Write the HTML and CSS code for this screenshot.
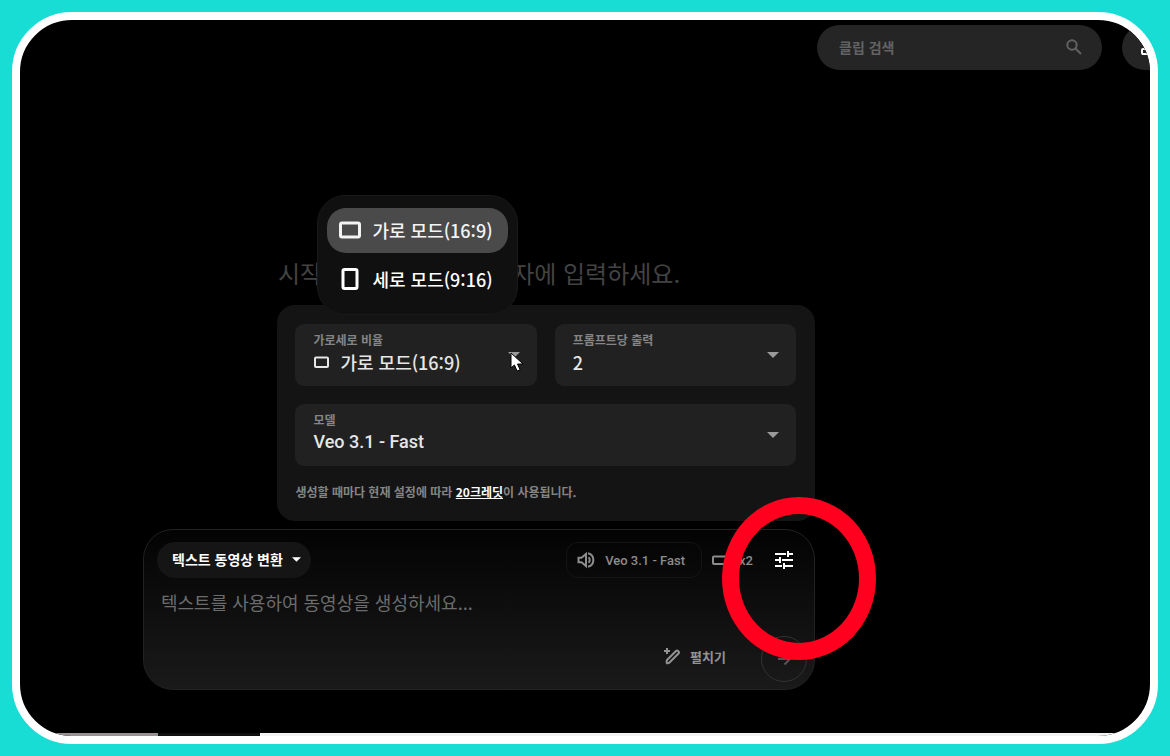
FILE: index.html
```html
<!DOCTYPE html>
<html lang="ko">
<head>
<meta charset="utf-8">
<meta name="viewport" content="width=device-width, initial-scale=1">
<title>Veo</title>
<link rel="stylesheet" href="styles.css">
</head>
<body>
<div class="screen">
  <header class="topbar">
    <label class="search">
      <input class="search-input" type="search" placeholder="클립 검색" aria-label="클립 검색">
      <svg class="search-icon" viewBox="0 0 18 18" aria-hidden="true"><circle cx="7" cy="7" r="4.7"/><path d="M10.5 10.5 16 16"/></svg>
    </label>
    <button class="round-button" type="button" aria-label="보기 설정">
      <svg viewBox="0 0 20 20" aria-hidden="true"><rect x="3" y="11" width="6" height="5" rx="1"/><path d="M4 6h14M12 13h6"/></svg>
    </button>
  </header>

  <main class="workspace">
    <div class="column">
      <h1 class="headline">시작하려면 프롬프트 상자에 입력하세요.</h1>

      <section class="settings" aria-label="설정">
        <div class="fields">
          <div class="field">
            <label class="field-label" for="ratio">가로세로 비율</label>
            <div class="field-value">
              <svg class="value-icon" viewBox="0 0 16 14" aria-hidden="true"><rect x="1.5" y="2.5" width="13" height="9.5" rx="1"/></svg>
              <select class="select" id="ratio"><option>가로 모드(16:9)</option><option>세로 모드(9:16)</option></select>
            </div>
            <svg class="caret" viewBox="0 0 12 6" aria-hidden="true"><path d="M0 0h12L6 6z"/></svg>
            <svg class="cursor" viewBox="0 0 14 20" aria-hidden="true"><path d="M1 1v15l3.4-3 2.7 6 3-1.3-2.6-5.7H13z"/></svg>
            <div class="menu" role="listbox" aria-label="가로세로 비율">
              <button class="menu-item selected" type="button" role="option" aria-selected="true">
                <svg viewBox="0 0 24 24" aria-hidden="true"><rect x="2.5" y="5" width="19" height="14" rx="1.5"/></svg>가로 모드(16:9)
              </button>
              <button class="menu-item" type="button" role="option" aria-selected="false">
                <svg viewBox="0 0 24 24" aria-hidden="true"><rect x="5" y="2.5" width="14" height="19" rx="1.5"/></svg>세로 모드(9:16)
              </button>
            </div>
          </div>
          <div class="field">
            <label class="field-label" for="count">프롬프트당 출력</label>
            <div class="field-value"><select class="select" id="count"><option>2</option></select></div>
            <svg class="caret" viewBox="0 0 12 6" aria-hidden="true"><path d="M0 0h12L6 6z"/></svg>
          </div>
          <div class="field wide">
            <label class="field-label" for="model">모델</label>
            <div class="field-value"><select class="select latin" id="model"><option>Veo 3.1 - Fast</option></select></div>
            <svg class="caret" viewBox="0 0 12 6" aria-hidden="true"><path d="M0 0h12L6 6z"/></svg>
          </div>
        </div>
        <p class="hint">생성할 때마다 현재 설정에 따라 <a class="credits" href="#">20크레딧</a>이 사용됩니다.</p>
      </section>

      <section class="composer" aria-label="프롬프트">
        <div class="row">
          <button class="mode" type="button">텍스트 동영상 변환
            <svg class="mode-caret" viewBox="0 0 10 5" aria-hidden="true"><path d="M0 0h10L5 5z"/></svg>
          </button>
          <div class="status">
            <button class="model-chip latin" type="button">
              <svg class="chip-icon" viewBox="0 0 18 18" aria-hidden="true"><path d="M1.500 6.800h3L9 3v12l-4.500-3.800h-3z"/><path d="M11.500 6.300a3.500 3.500 0 0 1 0 5.400M11 2.200a7 7 0 0 1 0 13.600"/></svg>
              Veo 3.1 - Fast
            </button>
            <span class="count-chip latin">
              <svg class="chip-icon" viewBox="0 0 18 18" aria-hidden="true"><rect x="2" y="5.500" width="14" height="7.500" rx="1"/></svg>
              x2
            </span>
            <button class="tune" type="button" aria-label="설정">
              <svg viewBox="0 0 20 20" aria-hidden="true"><path d="M1 4h11M15 4h4M14 1v6M1 10h4M8 10h11M6 7v6M1 16h7M11 16h8M10 13v6"/></svg>
            </button>
          </div>
        </div>
        <textarea class="prompt" rows="1" placeholder="텍스트를 사용하여 동영상을 생성하세요..." aria-label="프롬프트 입력"></textarea>
        <div class="row actions">
          <button class="expand" type="button">
            <svg class="chip-icon" viewBox="0 0 18 18" aria-hidden="true"><path d="M4 13 13 4q1-1 2 0l.5.500q1 1 0 2l-9 9q-1 1-2.500.800-1-1.300 0-3.300z"/><path d="M4 1v6M1 4h6"/></svg>
            펼치기
          </button>
          <button class="send" type="button" aria-label="보내기">
            <svg viewBox="0 0 20 20" aria-hidden="true"><path d="M4 10h12M10.500 4.500 16 10l-5.500 5.500"/></svg>
          </button>
        </div>
        <div class="ring"></div>
      </section>
    </div>
  </main>

  <div class="filmstrip" aria-hidden="true"><span class="frame-gray"></span><span class="frame-dark"></span><span class="frame-light"></span></div>
</div>
</body>
</html>
```

FILE: styles.css
```css
* { box-sizing: border-box; }

body {
  margin: 0;
  min-height: 100vh;
  padding: 12px;
  display: flex;
  background: #18ddd5;
  color: #e6e6e6;
  font-family: "Noto Sans CJK KR", sans-serif;
}

button, input, select, textarea {
  margin: 0;
  padding: 0;
  border: 0;
  background: none;
  color: inherit;
  font: inherit;
}

svg {
  flex: none;
  fill: none;
  stroke: currentColor;
  stroke-width: 2;
}

.screen {
  flex: 1;
  min-width: 0;
  display: flex;
  flex-direction: column;
  overflow: hidden;
  border: 8px solid #fff;
  border-radius: 60px;
  background: #000;
}

.latin { font-family: Roboto, "Noto Sans CJK KR", sans-serif; }

.topbar {
  display: flex;
  justify-content: flex-end;
  gap: 20px;
  margin-right: -18px;
  padding-top: 5px;
}

.search {
  display: flex;
  align-items: center;
  width: 285px;
  height: 45px;
  padding: 0 19px 2px 22px;
  border-radius: 23px;
  background: #252525;
  color: #626262;
}

.search-input {
  flex: 1;
  min-width: 0;
  font-size: 14px;
  font-weight: 700;
}

.search-input::placeholder, .prompt::placeholder { color: inherit; opacity: 1; }

.search-icon { width: 18px; height: 18px; }

.round-button {
  width: 46px;
  height: 45px;
  padding-left: 17px;
  border-radius: 50%;
  background: #252525;
  color: #fff;
}

.round-button svg { display: block; width: 20px; height: 20px; }

.workspace {
  flex: 1;
  display: flex;
  flex-direction: column;
  justify-content: flex-end;
  align-items: center;
  padding: 0 212px 43px 0;
}

.column {
  width: 100%;
  max-width: 672px;
  display: flex;
  flex-direction: column;
}

.headline {
  margin: 0 0 16px;
  color: #434343;
  font-size: 24px;
  line-height: 32px;
  font-weight: 400;
  text-align: center;
}

.settings {
  align-self: flex-end;
  width: 80%;
  margin-bottom: 8px;
  padding: 19px 19px 19px 18px;
  border-radius: 18px;
  background: #141414;
}

.fields {
  display: grid;
  grid-template-columns: 1fr 1fr;
  gap: 18px;
}

.field {
  position: relative;
  height: 62px;
  padding: 7px 18px;
  border-radius: 9px;
  background: #212121;
}

.wide { grid-column: span 2; }

.field-label {
  display: block;
  color: #858585;
  font-size: 12px;
  line-height: 18px;
  font-weight: 700;
}

.field-value {
  display: flex;
  align-items: center;
  gap: 10px;
}

.value-icon { width: 17px; height: 14px; }

.select {
  flex: 1;
  appearance: none;
  font-size: 18px;
  line-height: 26px;
  font-weight: 500;
}

.caret {
  position: absolute;
  top: 28px;
  right: 17px;
  width: 12px;
  height: 6px;
  fill: #9a9a9a;
  stroke: none;
}

.cursor {
  position: absolute;
  top: 28px;
  right: 13px;
  width: 14px;
  height: 20px;
  fill: #fff;
  stroke: #000;
  stroke-width: 1;
}

.menu {
  position: absolute;
  left: 22px;
  bottom: 71px;
  display: flex;
  flex-direction: column;
  gap: 4px;
  padding: 12px 9px;
  border: 1px solid #191919;
  border-radius: 28px;
  background: #101010;
}

.menu-item {
  display: flex;
  align-items: center;
  gap: 10px;
  height: 45px;
  padding: 0 15px 1px 11px;
  border-radius: 19px;
  color: #fff;
  font-size: 18px;
  font-weight: 500;
  white-space: nowrap;
}

.menu-item svg { width: 24px; height: 24px; stroke-width: 3; }

.selected { background: #4a4a4a; color: #f4f4f4; }

.hint {
  margin: 16px 0 0;
  color: #858585;
  font-size: 12px;
  line-height: 20px;
  font-weight: 700;
}

.credits { color: #fff; }

.composer {
  position: relative;
  padding: 12px 7px 7px 13px;
  border: 1px solid #222;
  border-radius: 30px;
  background: linear-gradient(#030303, #1a1a1a);
}

.row { display: flex; align-items: center; justify-content: space-between; }

.mode {
  display: flex;
  align-items: center;
  gap: 9px;
  height: 36px;
  padding: 0 10px 2px 15px;
  border-radius: 18px;
  background: #151515;
  color: #fff;
  font-size: 14px;
  font-weight: 700;
}

.mode-caret { width: 9px; height: 5px; fill: currentColor; stroke: none; }

.status { display: flex; align-items: center; color: #8c8c8c; }

.chip-icon { width: 18px; height: 18px; }

.model-chip, .count-chip {
  display: flex;
  align-items: center;
  gap: 10px;
  height: 36px;
  font-size: 13px;
  font-weight: 500;
}

.model-chip {
  padding: 0 16px 0 10px;
  border: 1px solid #141414;
  border-radius: 12px;
}

.count-chip { padding: 0 8px 0 9px; }

.tune, .send {
  display: flex;
  align-items: center;
  justify-content: center;
  width: 46px;
}

.tune { height: 36px; color: #fff; }

.tune svg, .send svg { width: 20px; height: 20px; }

.prompt {
  display: block;
  width: 100%;
  height: 46px;
  padding: 11px 4px 0;
  resize: none;
  color: #6c6c6c;
  font-size: 18px;
  line-height: 26px;
}

.actions { justify-content: flex-end; gap: 35px; padding-top: 12px; }

.expand {
  display: flex;
  align-items: center;
  gap: 9px;
  padding-bottom: 6px;
  color: #929292;
  font-size: 13px;
  font-weight: 700;
}

.send {
  height: 46px;
  border: 1px solid #333;
  border-radius: 50%;
  color: #555;
}

.ring {
  position: absolute;
  top: -33px;
  right: -62px;
  width: 154px;
  height: 163px;
  border: 17px solid #ff001e;
  border-radius: 50%;
  pointer-events: none;
}

.filmstrip { display: flex; height: 3px; }

.frame-gray { width: 138px; background: #999193; }
.frame-dark { width: 102px; background: #101010; }
.frame-light { flex: 1; background: #f4f2f0; }
```
